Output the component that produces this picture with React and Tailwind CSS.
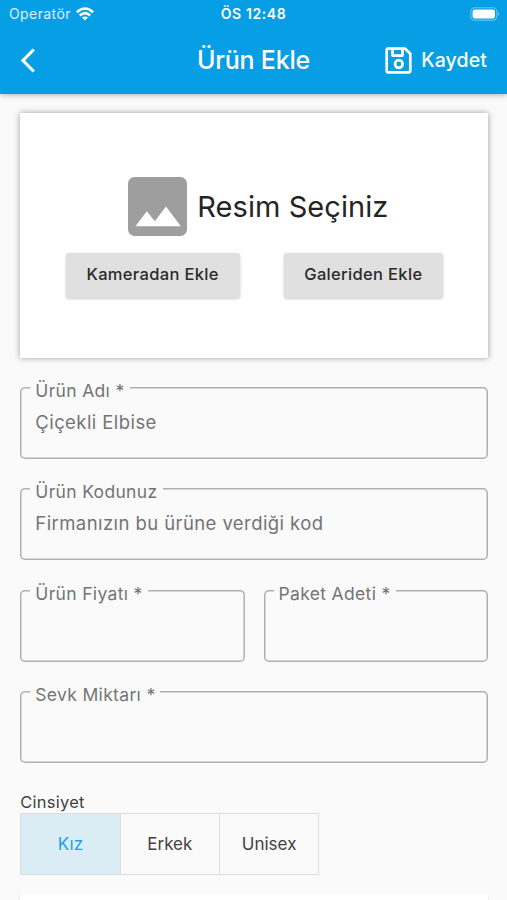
import React from "react";

function Field({ label, hint, notch, className = "" }) {
  return (
    <div className={`relative h-[72px] rounded-[5px] pl-[15px] pt-[23px] shadow-[inset_0_0_0_1.5px_#b0b0b0] ${className}`}>
      <span className={`absolute -top-[8px] left-[10px] h-[24px] whitespace-nowrap bg-[#fafafa] pl-[5px] leading-[24px] tracking-[0.33px] ${notch}`}>
        {label}
      </span>
      <span className="block text-[18.5px] leading-[24px] tracking-[0.42px]">{hint}</span>
    </div>
  );
}

function ImageIcon() {
  return (
    <svg className="h-[59px] w-[59px]" viewBox="0 0 59 59">
      <rect width="59" height="59" rx="6.5" fill="#9e9e9e" />
      <path d="M7.5 49.3 L18.8 34.3 L26.8 44.2 L38 29.6 L52.8 49.3 Z" fill="#fff" />
    </svg>
  );
}

function SaveIcon() {
  return (
    <svg className="h-[27px] w-[27px]" viewBox="0 0 27 27" fill="none" stroke="#fff" strokeWidth="2.7" strokeLinejoin="round">
      <path d="M2.8 1.7 H20.2 L25.3 6.8 V23.7 Q25.3 25.3 23.7 25.3 H3.3 Q1.7 25.3 1.7 23.7 V2.8 Q1.7 1.7 2.8 1.7 Z" />
      <path d="M7.5 2 V8.6 H17.5 V2" />
      <circle cx="13.8" cy="17" r="3.8" />
    </svg>
  );
}

export default function App() {
  return (
    <div className="h-[900px] w-[507px] overflow-hidden bg-[#fafafa] font-['Inter',sans-serif] text-[#242424]">
      <header className="h-[94px] bg-[#069ee4] text-white shadow-[0_1px_5px_rgba(0,0,0,0.3)]">
        <div className="grid h-[27px] grid-cols-3 items-center px-[9px]">
          <div className="flex items-center gap-[5px] text-[14px] tracking-[0.4px] text-white/85">
            <span>Operatör</span>
            <svg className="h-[14px] w-[18px]" viewBox="0 0 18 14" fill="none" stroke="#fff" strokeWidth="2.6">
              <path d="M0.9 5.2 Q9 -2.2 17.1 5.2" />
              <path d="M3.8 8.5 Q9 3.8 14.2 8.5" />
              <path d="M9 13.6 L5.9 10.5 Q9 8.3 12.1 10.5 Z" fill="#fff" stroke="none" />
            </svg>
          </div>
          <span className="text-center text-[14px] font-semibold tracking-[0.6px]">ÖS 12:48</span>
          <svg className="-mr-[2px] h-[14px] w-[30px] justify-self-end" viewBox="0 0 30 14">
            <rect x="0.8" y="0.7" width="26" height="12.4" rx="3.8" fill="none" stroke="#fff" strokeOpacity="0.4" strokeWidth="1.1" />
            <rect x="2.6" y="2.4" width="22.4" height="9" rx="2.2" fill="#fff" />
            <path d="M28 5 Q30.2 6.9 28 8.8 Z" fill="#fff" fillOpacity="0.45" />
          </svg>
        </div>
        <div className="grid h-[66px] grid-cols-[1fr_auto_1fr] items-center px-[20px]">
          <svg className="h-[25px] w-[16px]" viewBox="0 0 16 25" fill="none" stroke="#fff" strokeWidth="3.2">
            <path d="M13.8 1.5 L3 12.5 L13.8 23.5" />
          </svg>
          <h1 className="text-[25px] font-medium leading-[30px] tracking-[-0.2px]">Ürün Ekle</h1>
          <div className="flex items-center justify-end gap-[9px] text-[19.5px] font-medium tracking-[0.1px]">
            <SaveIcon />
            <span className="pt-px">Kaydet</span>
          </div>
        </div>
      </header>
      <main className="pl-[20.3px] pr-[19.2px] pt-[19px]">
        <section className="h-[244.5px] bg-white pt-[64px] shadow-[0_0_6px_rgba(0,0,0,0.38)]">
          <div className="flex items-center gap-[10px] pl-[108px]">
            <ImageIcon />
            <span className="text-[29px] leading-[40px] tracking-[0.06px]">Resim Seçiniz</span>
          </div>
          <div className="flex gap-[44px] pl-[45.3px] pt-[16.5px] text-[16.5px] font-medium tracking-[0.33px] text-[#2b2b2b]">
            <button className="h-[45px] w-[174px] rounded-[3px] bg-[#e0e0e0] pb-[2px] shadow-[0_1px_3px_rgba(0,0,0,0.2)]">Kameradan Ekle</button>
            <button className="h-[45px] w-[159.5px] rounded-[3px] bg-[#e0e0e0] pb-[2px] shadow-[0_1px_3px_rgba(0,0,0,0.2)]">Galeriden Ekle</button>
          </div>
        </section>
        <div className="flex flex-col gap-[29.5px] pt-[29.4px] text-[17.5px] text-[#747474]">
          <Field label="Ürün Adı *" hint="Çiçekli Elbise" notch="w-[100px]" />
          <Field label="Ürün Kodunuz" hint="Firmanızın bu ürüne verdiği kod" notch="w-[133px]" />
          <div className="flex gap-[19px]">
            <Field label="Ürün Fiyatı *" notch="w-[118px]" className="flex-1" />
            <Field label="Paket Adeti *" notch="w-[122px]" className="flex-1" />
          </div>
          <Field label="Sevk Miktarı *" notch="w-[130px]" />
        </div>
        <div className="pt-[27.8px] text-[17px] leading-[22px] text-[#424242]">
          <p className="text-[16.5px] tracking-[0.25px]">Cinsiyet</p>
          <div className="flex h-[61.5px] w-[299px] border border-[#dedede]">
            <button className="flex-1 bg-[#daedf5] text-[#1ba1f0]">Kız</button>
            <button className="flex-1 border-x border-[#dedede]">Erkek</button>
            <button className="flex-1">Unisex</button>
          </div>
        </div>
        <section className="mt-[19.2px] h-[60px] rounded-[4px] bg-white shadow-[0_2px_3px_rgba(0,0,0,0.2)]" />
      </main>
    </div>
  );
}
